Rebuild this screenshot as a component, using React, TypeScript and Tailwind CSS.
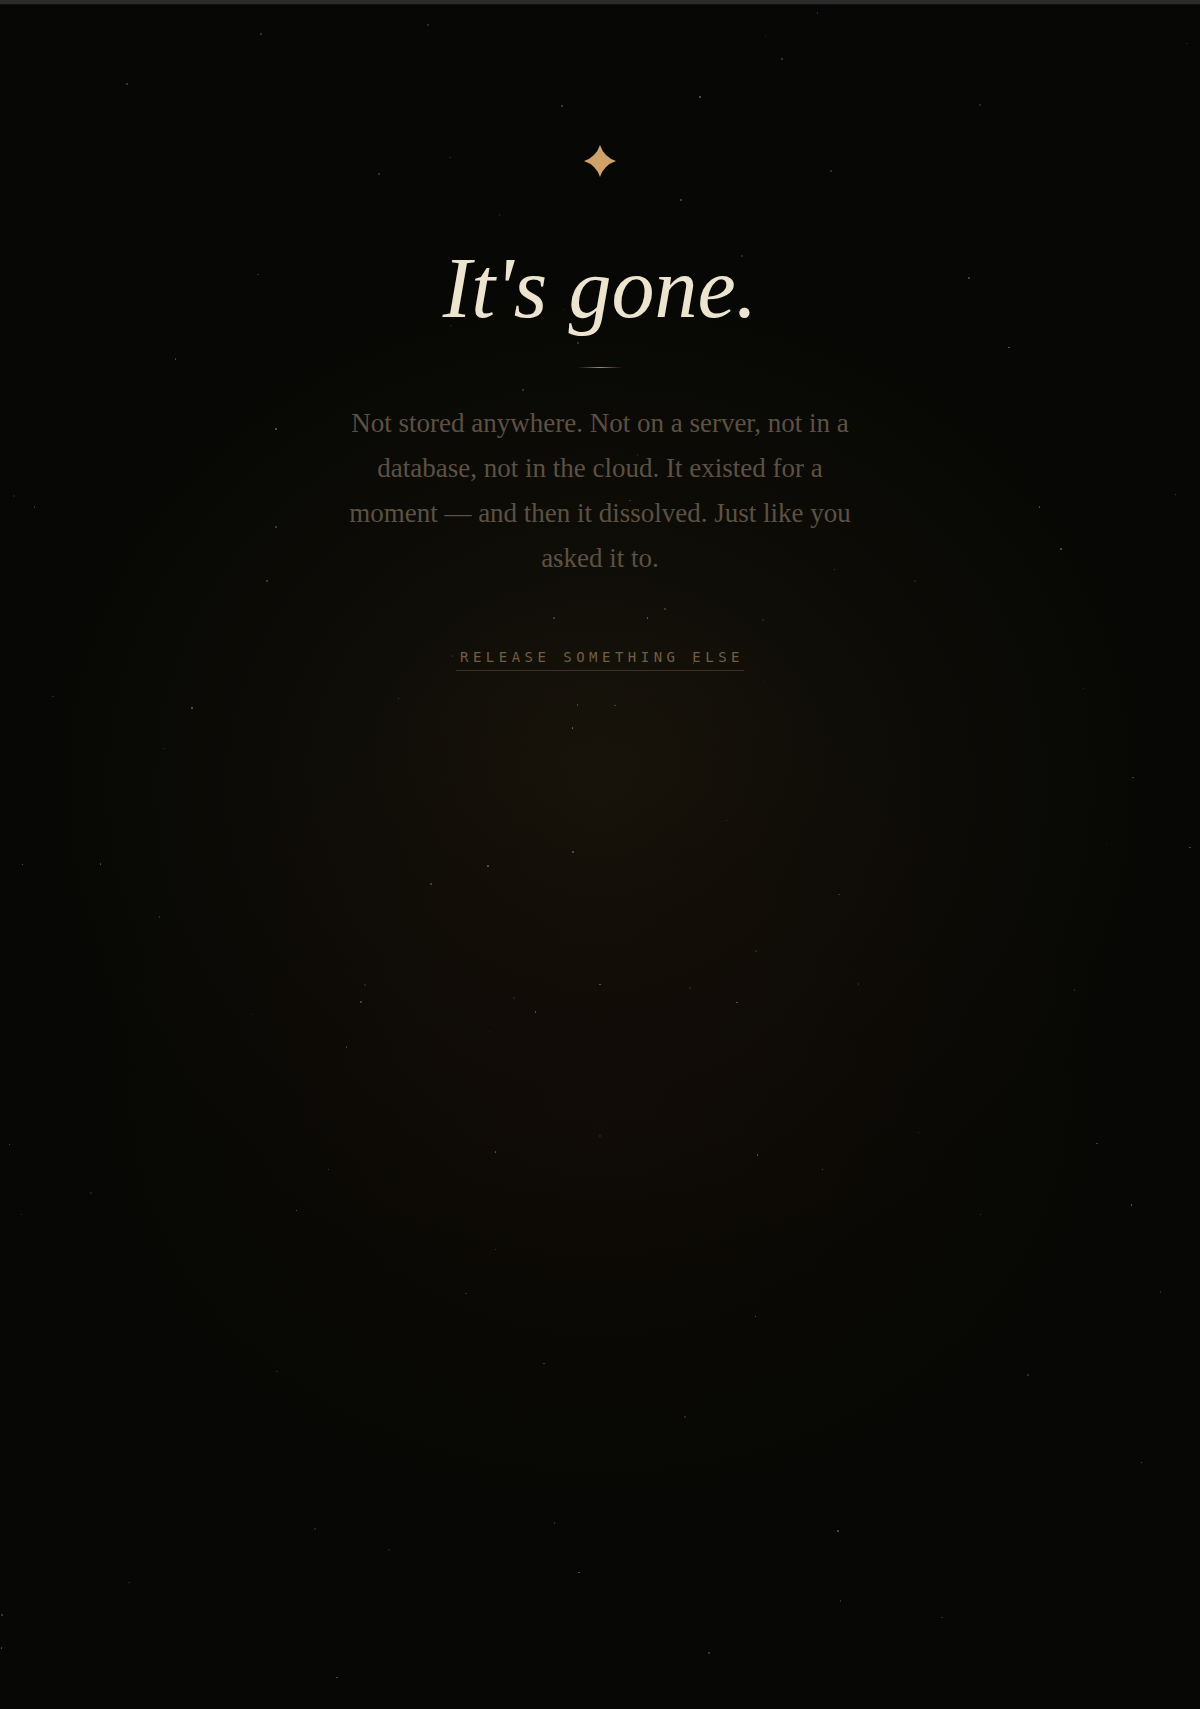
const DUST = (() => {
  let seed = 91;
  const rand = () => {
    seed = (seed * 16807) % 2147483647;
    return (seed - 1) / 2147483646;
  };
  return Array.from({ length: 110 }, () => ({
    x: rand() * 1200,
    y: 8 + rand() * 1690,
    size: rand() > 0.8 ? 2 : 1.5,
    opacity: 0.12 + rand() * 0.35,
  }));
})();

function Sparkle() {
  return (
    <svg width="32" height="32" viewBox="0 0 32 32" aria-hidden>
      <path
        d="M16 0 Q20 12 32 16 Q20 20 16 32 Q12 20 0 16 Q12 12 16 0 Z"
        fill="#d0a26b"
      />
    </svg>
  );
}

export default function App() {
  return (
    <div className="relative min-h-screen overflow-hidden bg-[#070805]">
      <div className="h-[4px] bg-[#2b2b2b]" />
      <div className="h-px bg-[#101110]" />

      {/* warm glow behind the text */}
      <div className="pointer-events-none absolute inset-0 bg-[radial-gradient(ellipse_560px_500px_at_50%_46%,rgba(28,24,12,0.8),rgba(20,15,8,0.4)_60%,transparent_100%)]" />
      <div className="pointer-events-none absolute inset-0 bg-[radial-gradient(ellipse_520px_420px_at_50%_64%,rgba(22,12,6,0.45),rgba(18,10,5,0.25)_60%,transparent_100%)]" />

      {DUST.map((d, i) => (
        <span
          key={i}
          className="pointer-events-none absolute rounded-full bg-[#d8cfb8]"
          style={{
            left: d.x,
            top: d.y,
            width: d.size,
            height: d.size,
            opacity: d.opacity,
          }}
        />
      ))}

      <main className="relative flex flex-col items-center pt-[140px] text-center">
        <Sparkle />

        <h1 className="mt-[68px] font-['Liberation_Serif',serif] text-[86px] leading-none italic text-[#ede4d0]">
          It's gone.
        </h1>

        <div className="mt-[36px] h-px w-[44px] bg-gradient-to-r from-transparent via-[#b58552] to-transparent" />

        <p className="mt-[33px] max-w-[540px] font-['Liberation_Serif',serif] text-[27px] leading-[45px] text-[#5c5143]">
          Not stored anywhere. Not on a server, not in a database, not in the
          cloud. It existed for a moment — and then it dissolved. Just like you
          asked it to.
        </p>

        <button className="mt-[68px] border-b border-[#3a3024] pb-[5px] pl-[4px] font-['DejaVu_Sans_Mono',monospace] text-[14px] leading-4 tracking-[0.32em] text-[#725e42]">
          RELEASE SOMETHING ELSE
        </button>
      </main>
    </div>
  );
}
